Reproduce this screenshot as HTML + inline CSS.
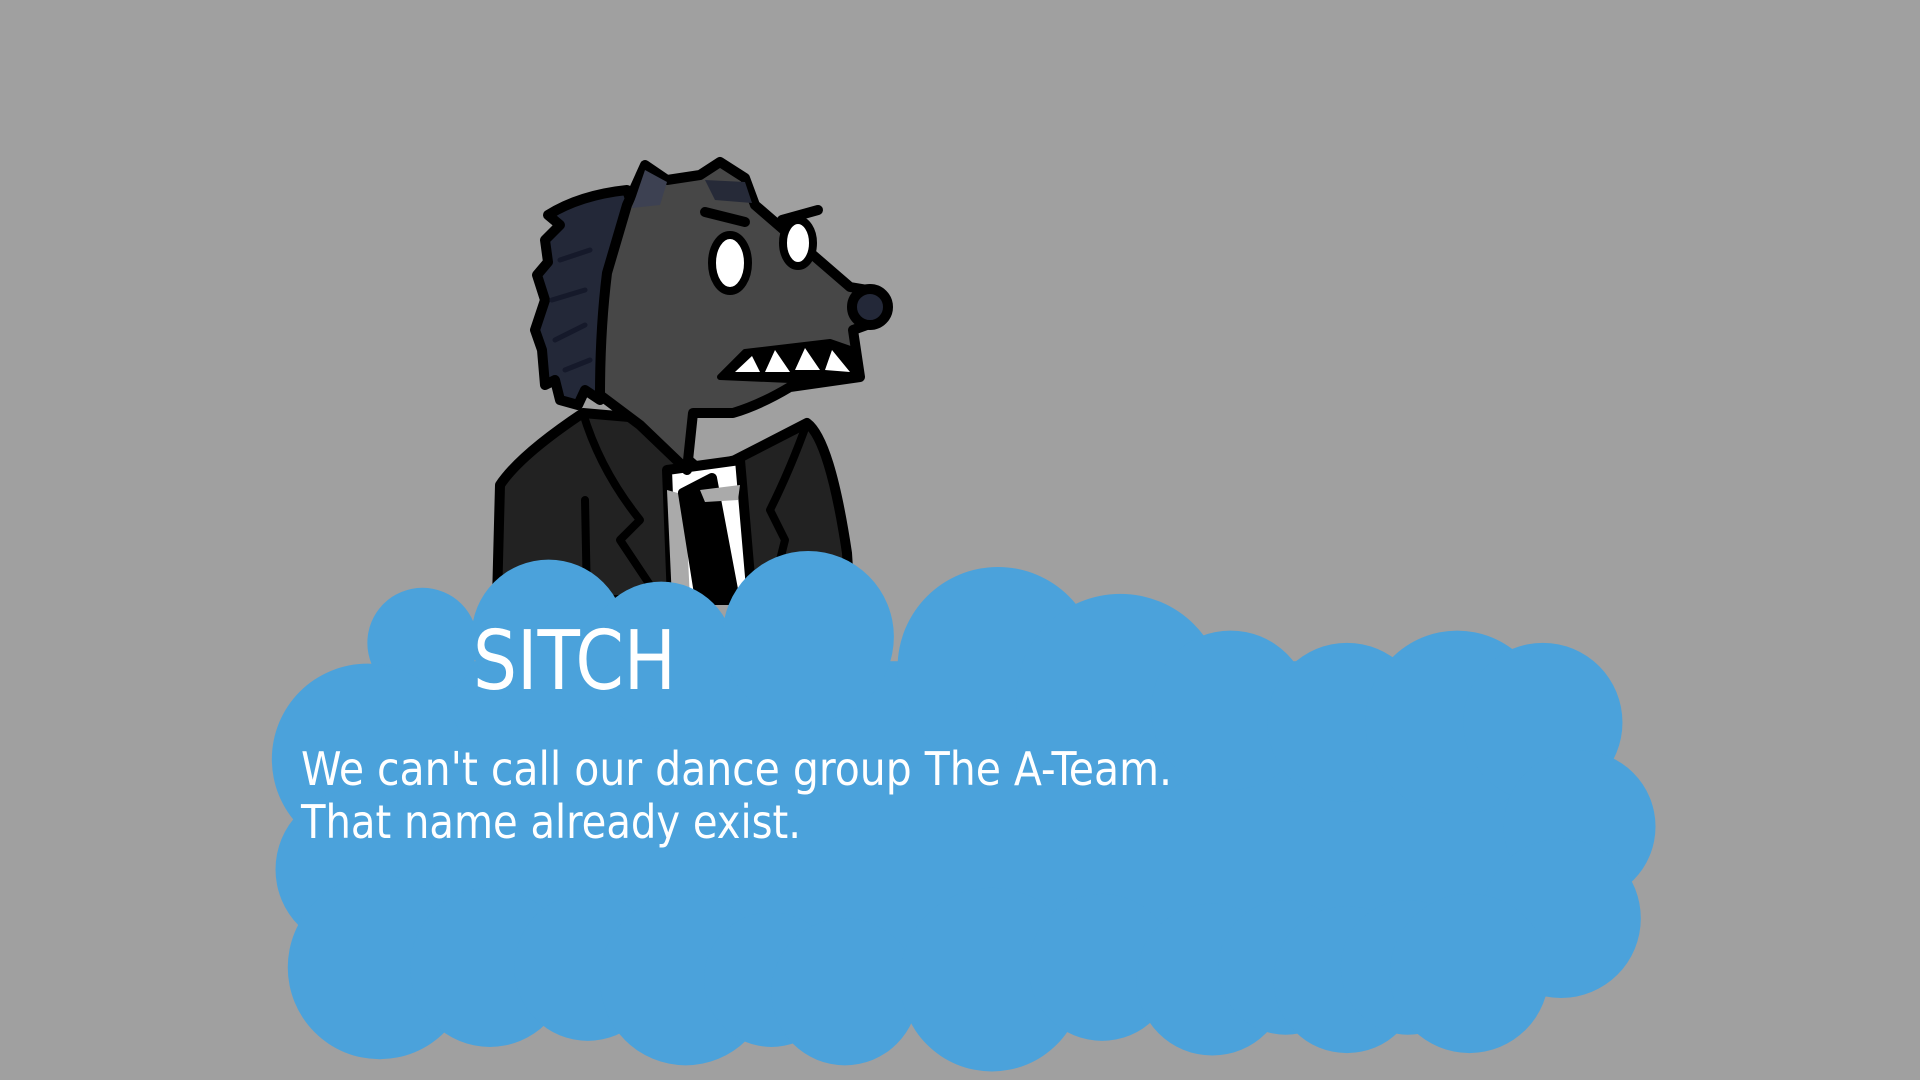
<!DOCTYPE html>
<html><head><meta charset="utf-8"><style>
html,body{margin:0;padding:0;background:#a0a0a0;width:1920px;height:1080px;overflow:hidden}
svg{display:block}
</style></head><body>
<svg width="1920" height="1080" viewBox="0 0 1920 1080" xmlns="http://www.w3.org/2000/svg">
<rect width="1920" height="1080" fill="#a0a0a0"/>
<g stroke="#000" stroke-width="10" stroke-linejoin="round" stroke-linecap="round">
  <path d="M497,600 L500,485 Q520,455 583,413 L640,418 L700,470 L735,460 L807,423 Q830,440 847,553 L850,600 Z" fill="#222"/>
  <path d="M583,413 Q600,470 640,520 L620,540 L660,600" fill="none" stroke-width="8"/>
  <path d="M807,423 Q790,470 770,510 L785,540 L770,600" fill="none" stroke-width="8"/>
  <path d="M585,500 L587,600" fill="none" stroke-width="8"/>
  <path d="M667,470 L740,460 L752,600 L672,600 Z" fill="#fff"/>
  <path d="M667,490 L672,600 L690,600 L685,495 Z" fill="#aaa" stroke="none"/>
  <path d="M683,493 L712,478 L735,600 L700,600 Z" fill="#000"/>
  <path d="M700,490 L740,485 L738,500 L705,502 Z" fill="#aaa" stroke="none"/>
  <!-- hair -->
  <path d="M545,240 L560,225 L548,215 Q580,195 627,190 L640,230 L610,290 L600,400 L585,390 L578,405 L560,400 L555,380 L545,385 L542,350 L535,330 L545,300 L537,275 L548,262 Z" fill="#232838"/>
  <path d="M560,260 L590,250 M552,300 L585,290 M555,340 L585,325 M565,370 L590,360" stroke="#15192a" stroke-width="5" fill="none"/>
  <!-- face -->
  <path d="M627,205 L645,165 L667,180 L700,175 L720,162 L745,178 L755,205 L850,287 L868,290 L885,305 L875,322 L853,330 L860,377 L790,387 Q760,405 733,413 L693,413 L687,470 L640,425 L600,395 Q600,330 607,273 Z" fill="#474747"/>
  <path d="M645,170 L667,182 L660,205 L632,208 Z" fill="#3d4152" stroke="none"/>
  <path d="M705,180 L745,182 L752,203 L715,200 Z" fill="#262a38" stroke="none"/>
  <circle cx="870" cy="307" r="18" fill="#232838"/>
  <path d="M720,377 L745,352 L830,342 L853,350 L860,377 L790,380 Z" fill="#000" stroke-width="6"/>
  <path d="M735,372 L752,356 L760,372 Z M765,372 L775,350 L790,372 Z M795,370 L805,348 L820,370 Z M825,370 L832,350 L850,372 Z" fill="#fff" stroke="none"/>
  <ellipse cx="730" cy="263" rx="18" ry="28" fill="#fff" stroke-width="8"/>
  <ellipse cx="798" cy="243" rx="15" ry="23" fill="#fff" stroke-width="8"/>
  <path d="M705,212 L745,222" fill="none" stroke-width="10"/>
  <path d="M782,220 L818,210" fill="none" stroke-width="10"/>
</g>
<g fill="#4ba2db" transform="scale(1.2245)">
  <rect x="270" y="570" width="1020" height="230"/>
  <rect x="320" y="540" width="950" height="60"/>
  <circle cx="345" cy="525" r="45"/>
  <circle cx="448" cy="520" r="63"/>
  <circle cx="540" cy="535" r="60"/>
  <circle cx="660" cy="520" r="70"/>
  <circle cx="815" cy="545" r="82"/>
  <circle cx="915" cy="570" r="85"/>
  <circle cx="1005" cy="580" r="65"/>
  <circle cx="1100" cy="590" r="65"/>
  <circle cx="1190" cy="590" r="75"/>
  <circle cx="1260" cy="590" r="65"/>
  <circle cx="1290" cy="675" r="62"/>
  <circle cx="1275" cy="750" r="65"/>
  <circle cx="300" cy="620" r="78"/>
  <circle cx="290" cy="710" r="65"/>
  <circle cx="310" cy="790" r="75"/>
  <circle cx="400" cy="790" r="65"/>
  <circle cx="480" cy="790" r="60"/>
  <circle cx="560" cy="800" r="70"/>
  <circle cx="630" cy="800" r="55"/>
  <circle cx="690" cy="810" r="60"/>
  <circle cx="810" cy="800" r="75"/>
  <circle cx="900" cy="790" r="60"/>
  <circle cx="990" cy="800" r="62"/>
  <circle cx="1050" cy="790" r="55"/>
  <circle cx="1100" cy="800" r="60"/>
  <circle cx="1150" cy="790" r="55"/>
  <circle cx="1200" cy="795" r="65"/>
</g>
<g fill="#fff" font-family="'DejaVu Sans Condensed','Liberation Sans Narrow','Liberation Sans',sans-serif">
  <text x="473" y="689" font-size="82" textLength="203" lengthAdjust="spacingAndGlyphs">SITCH</text>
  <text x="301" y="785" font-size="46" textLength="871" lengthAdjust="spacingAndGlyphs">We can't call our dance group The A-Team.</text>
  <text x="301" y="838" font-size="46" textLength="500" lengthAdjust="spacingAndGlyphs">That name already exist.</text>
</g>
</svg>
</body></html>
